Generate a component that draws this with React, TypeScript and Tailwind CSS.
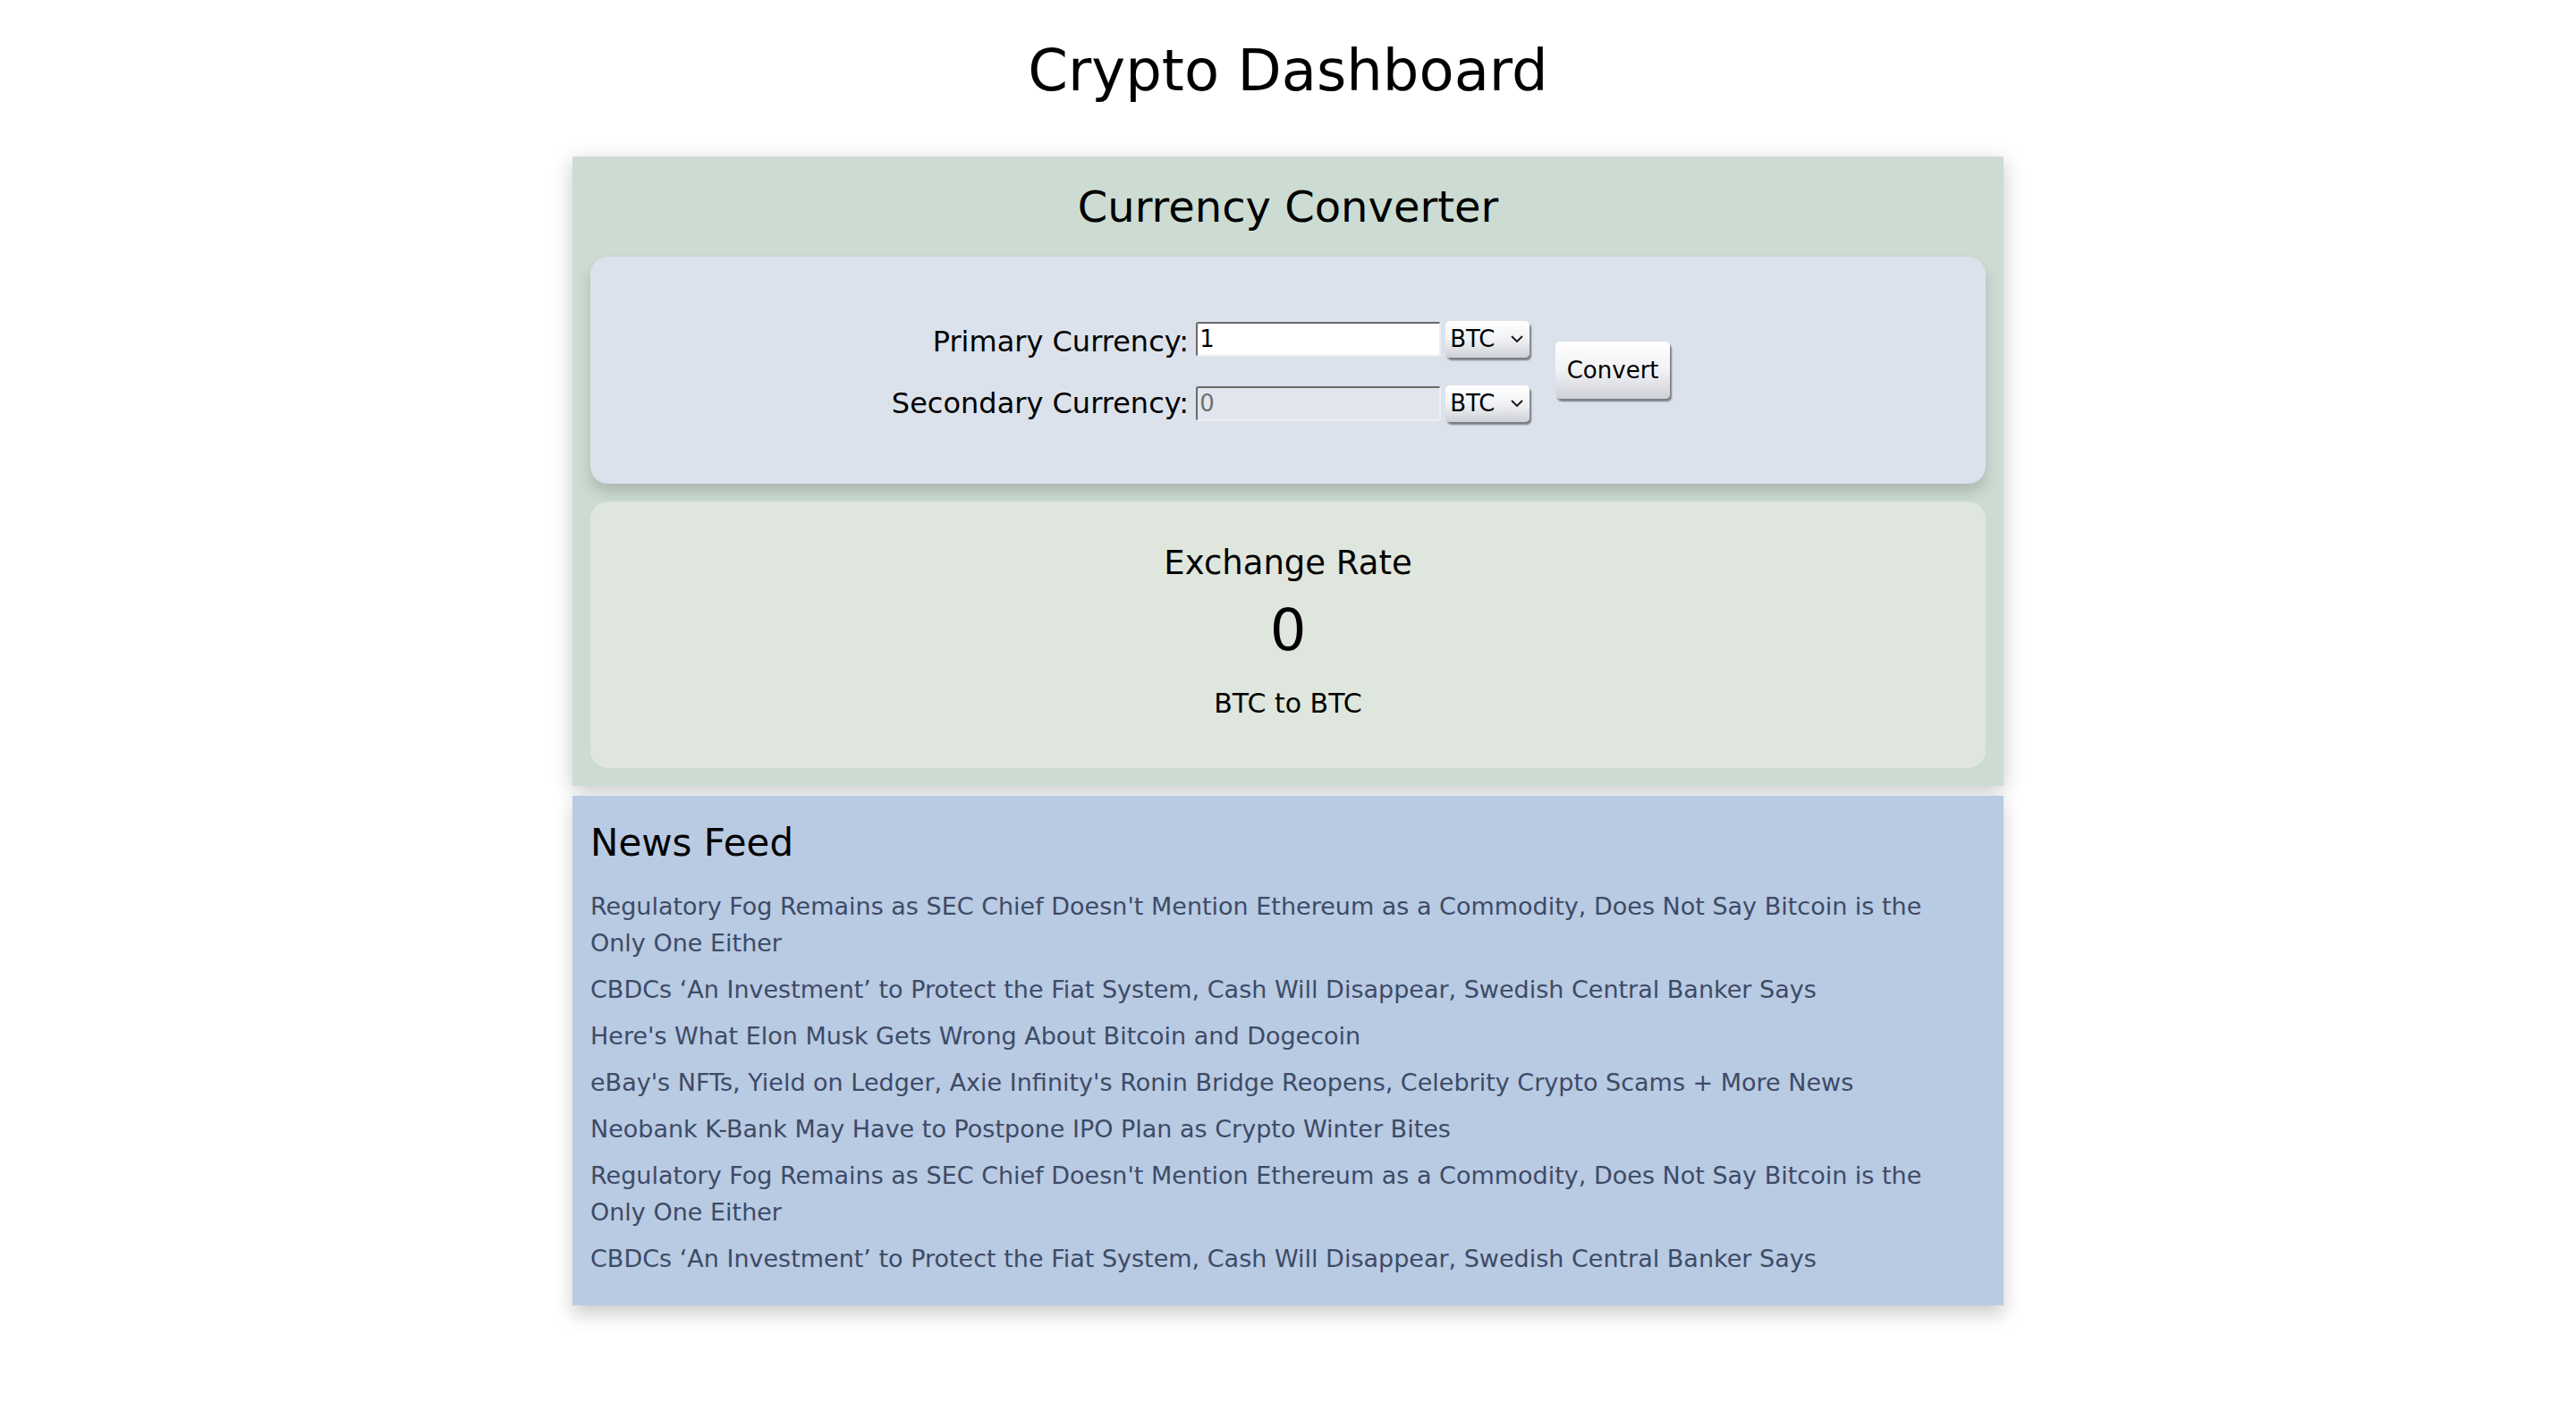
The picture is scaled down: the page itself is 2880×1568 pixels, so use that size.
import { useState } from "react"

const news = [
  "Regulatory Fog Remains as SEC Chief Doesn't Mention Ethereum as a Commodity, Does Not Say Bitcoin is the Only One Either",
  "CBDCs ‘An Investment’ to Protect the Fiat System, Cash Will Disappear, Swedish Central Banker Says",
  "Here's What Elon Musk Gets Wrong About Bitcoin and Dogecoin",
  "eBay's NFTs, Yield on Ledger, Axie Infinity's Ronin Bridge Reopens, Celebrity Crypto Scams + More News",
  "Neobank K-Bank May Have to Postpone IPO Plan as Crypto Winter Bites",
  "Regulatory Fog Remains as SEC Chief Doesn't Mention Ethereum as a Commodity, Does Not Say Bitcoin is the Only One Either",
  "CBDCs ‘An Investment’ to Protect the Fiat System, Cash Will Disappear, Swedish Central Banker Says",
]

const currencies = ["BTC", "ETH", "USD", "XRP", "LTC", "ADA"]

function CurrencySelect({ value, onChange }: { value: string; onChange: (v: string) => void }) {
  return (
    <div className="relative ml-[5px] h-[41px] w-[94px] rounded-[5px] bg-linear-to-b from-white via-[#f1f2f5] to-[#cfd1d8] shadow-[2px_3px_2px_rgba(0,0,0,0.45)]">
      <select
        value={value}
        onChange={(e) => onChange(e.target.value)}
        className="h-full w-full cursor-pointer appearance-none bg-transparent pl-[5px] text-[26px] leading-[41px] text-black outline-none"
      >
        {currencies.map((c) => (
          <option key={c} value={c}>
            {c}
          </option>
        ))}
      </select>
      <svg
        className="pointer-events-none absolute right-[7px] top-[16px]"
        width="14"
        height="9"
        viewBox="0 0 14 9"
        fill="none"
      >
        <polyline points="1,1 7,7 13,1" stroke="#111" strokeWidth="1.8" />
      </svg>
    </div>
  )
}

export default function App() {
  const [amount, setAmount] = useState("1")
  const [primary, setPrimary] = useState("BTC")
  const [secondary, setSecondary] = useState("BTC")

  return (
    <div className="flex min-h-screen w-full flex-col items-center bg-white pt-[42px] font-['DejaVu_Sans',sans-serif] text-black">
      <h1 className="mb-[58px] text-[64px] leading-[75px]">Crypto Dashboard</h1>

      <div className="flex w-[1600px] flex-col">
        {/* converter + exchange rate */}
        <div className="bg-[#cddcd3] p-[20px] shadow-[0_6px_22px_rgba(0,0,0,0.22)]">
          <h2 className="mb-[28px] mt-[8px] text-center text-[48px] leading-[56px]">Currency Converter</h2>

          <div className="flex h-[254px] items-center justify-center rounded-[20px] bg-[#dce2ec] pr-[16px] shadow-[0_10px_16px_rgba(0,0,0,0.16)]">
            <div className="grid grid-cols-[auto_auto_auto] items-center gap-y-[28px]">
              <label className="mr-[8px] mt-[6px] text-right text-[32px] leading-[41px]">Primary Currency:</label>
              <input
                type="number"
                value={amount}
                onChange={(e) => setAmount(e.target.value)}
                className="h-[39px] w-[274px] rounded-[3px] border-2 border-b-[#eceef2] border-l-[#6a6a6a] border-r-[#eceef2] border-t-[#6a6a6a] bg-white pl-[2px] text-[26px] text-black outline-none [appearance:textfield]"
              />
              <CurrencySelect value={primary} onChange={setPrimary} />

              <label className="mr-[8px] text-right text-[32px] leading-[41px]">Secondary Currency:</label>
              <input
                type="number"
                value="0"
                disabled
                className="h-[39px] w-[274px] rounded-[3px] border-2 border-b-[#eef0f4] border-l-[#6a6a6a] border-r-[#eef0f4] border-t-[#6a6a6a] bg-[#e1e6ee] pl-[2px] text-[26px] text-[#6f6f6f] outline-none"
              />
              <CurrencySelect value={secondary} onChange={setSecondary} />
            </div>
            <button className="ml-[29px] h-[64px] w-[128px] rounded-[5px] bg-linear-to-b from-white via-[#f1f2f5] to-[#cfd1d8] text-[26px] shadow-[2px_3px_2px_rgba(0,0,0,0.45)]">
              Convert
            </button>
          </div>

          <div className="mt-[20px] flex flex-col items-center rounded-[20px] bg-[#dfe6de] pb-[55px] pt-[47px] text-center">
            <h3 className="text-[37px] leading-[43px]">Exchange Rate</h3>
            <h1 className="mt-[17px] text-[64px] leading-[75px]">0</h1>
            <p className="mt-[26px] text-[30px] leading-[35px]">
              {primary} to {secondary}
            </p>
          </div>
        </div>

        {/* news */}
        <div className="mt-[11px] bg-[#b9cae3] px-[20px] pb-[32px] pt-[28px] shadow-[0_10px_20px_rgba(0,0,0,0.2)]">
          <h2 className="text-[42px] leading-[49px]">News Feed</h2>
          <div className="mt-[26px] flex flex-col gap-[11px] pr-[50px]">
            {news.map((title, i) => (
              <a key={i} href="#" className="text-[27px] leading-[41px] text-[#3d4b66]">
                {title}
              </a>
            ))}
          </div>
        </div>
      </div>
    </div>
  )
}
